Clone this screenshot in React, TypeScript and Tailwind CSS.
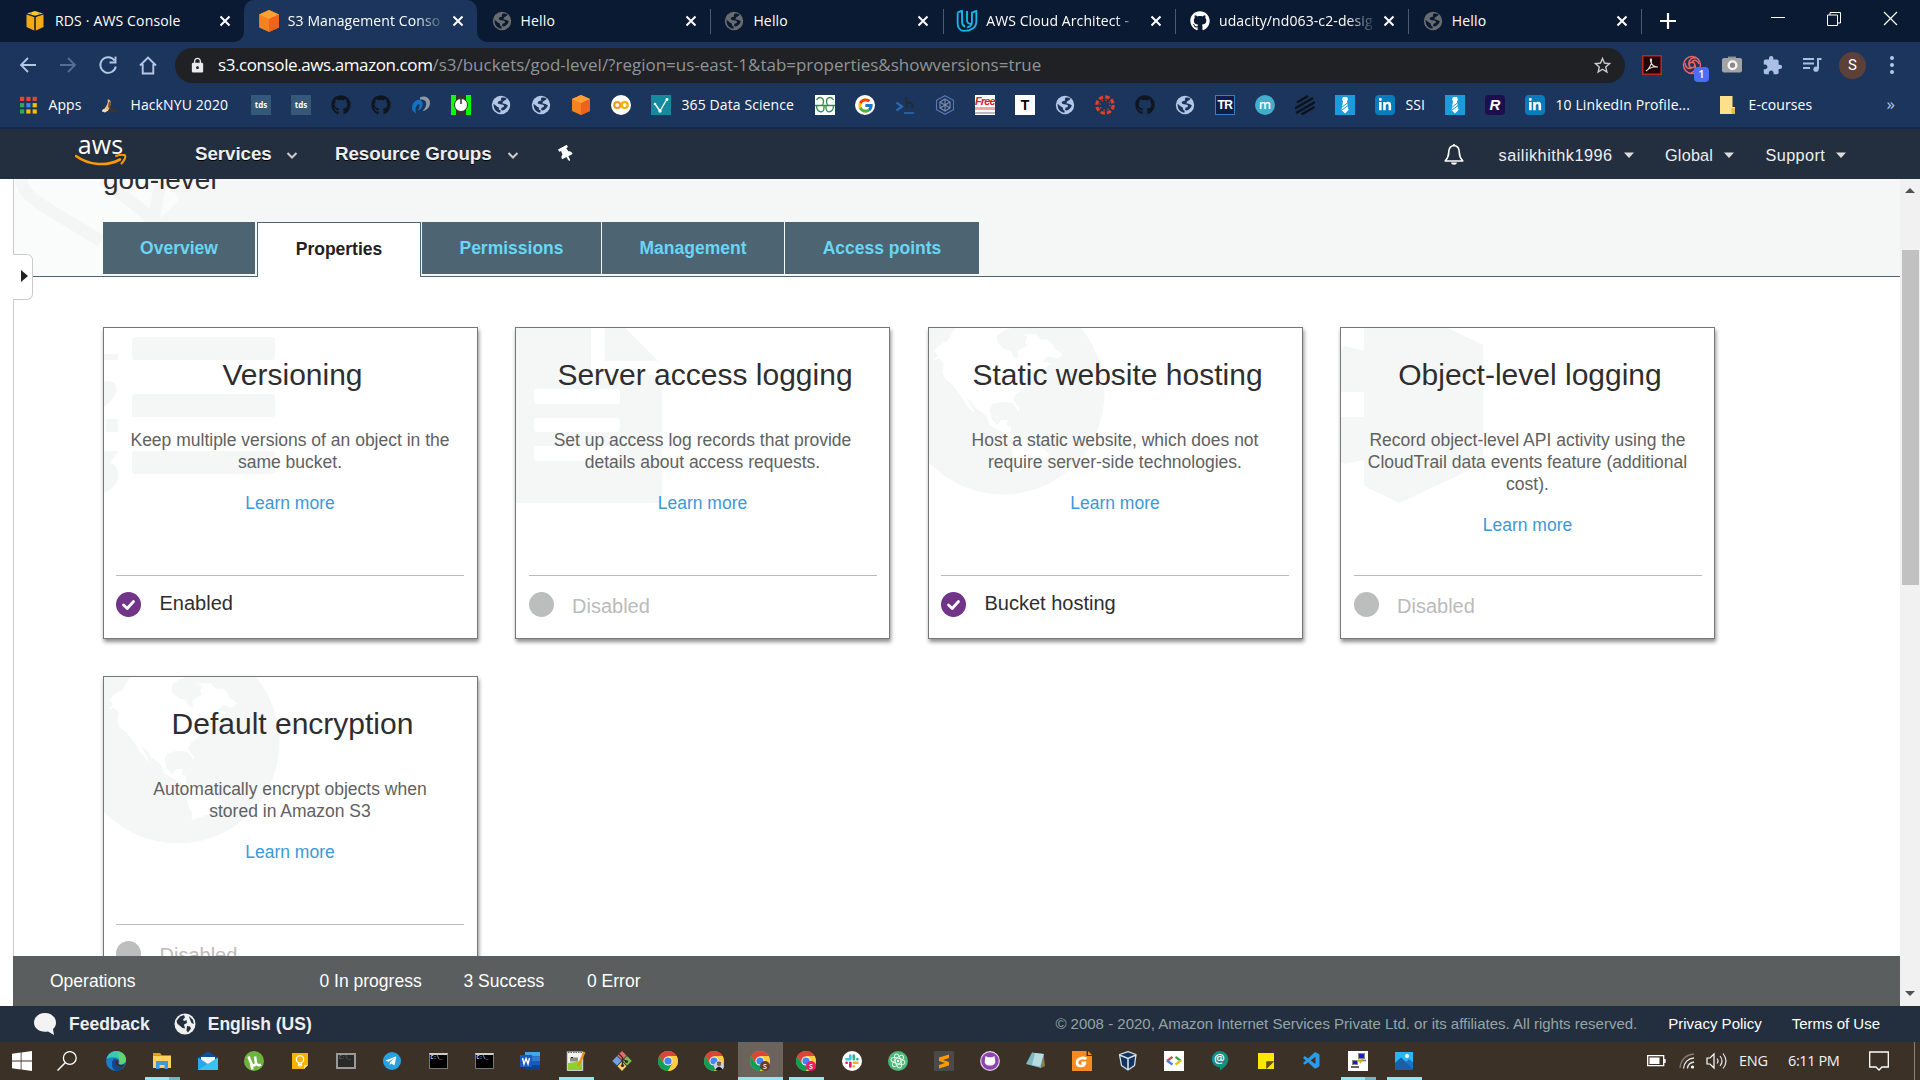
import React from "react";
import { FaGithub, FaLinkedinIn, FaTelegramPlane, FaThumbtack } from "react-icons/fa";
import { FcGoogle } from "react-icons/fc";
import { MdExtension, MdLock, MdOutlineStarBorder } from "react-icons/md";
import { VscVscode } from "react-icons/vsc";

/* ---------- small drawings ---------- */

function Svg({ size = 20, children, box = 20 }: { size?: number; box?: number; children: React.ReactNode }) {
  return (
    <svg width={size} height={size} viewBox={`0 0 ${box} ${box}`} fill="none" className="block shrink-0">
      {children}
    </svg>
  );
}

function Globe({ color, cut }: { color: string; cut: string }) {
  return (
    <Svg>
      <circle cx="10" cy="10" r="9.200" fill={color} />
      <path d="M10.500 2.200H15l-1.500 2.600-.2 2.200-3 .3-.6 1.500 2.800.6c1.500.3 2.300 1.200 2 2.400l-2.200 1.200-.8 2.700-1.500 2.400H8.600v-2.300L7 12.200 5 11 1.800 8.700c-.5 3 .8 6 3.200 7.800l4.500 2.200 4-1 4.300-4.200" fill="none" />
      <path d="M2.600 8.800l3.600 3 1.600.6.2 2 1.600 1.200v2c-4.200.3-7.400-3.800-7-8.800zM10.800 2.500c-1.300 1-1 2-.5 3l-2.600.7c-1.400.6-1.300 2.400.2 2.900l4 .7c1.500.4 1.600 1.900.2 2.400l-1.600.6-.4 2.200 1.500.6c2-.5 4.500-2.600 5.300-5.400l-2.600-1.200-3-.7 1-2 2.500-1.500 1-1.200C14.500 2.900 12.800 2.400 10.800 2.500z" fill={cut} />
    </Svg>
  );
}

const GreyGlobe = () => <Globe color="#686c70" cut="#0a1a33" />;
const LightGlobe = () => <Globe color="#b4c7e7" cut="#1b355c" />;

const OrangeCube = ({ big = false }: { big?: boolean }) => (
  <Svg size={big ? 22 : 20}>
    <path d="M10 0l9 4v12l-9 4-9-4V4z" fill="#f58220" />
    <path d="M10 0l9 4-9 4.200L1 4z" fill="#ffa033" />
    <path d="M10 8.200L19 4v12l-9 4z" fill="#ed6320" />
  </Svg>
);

const YellowCube = () => (
  <Svg>
    <path d="M1.500 3.500L9 6v13.500L1.500 16zM18.500 3.500L11 6v13.500l7.500-3.500z" fill="#f2a917" />
    <path d="M2 2.500L10 0l8 2.500-8 2.300z" fill="#ffc63a" />
    <path d="M6 1.500v3M14 1.500v3" stroke="#8a5b06" strokeWidth=".7" />
    <path d="M9.400 6v13.500h1.200V6z" fill="#7b5207" />
  </Svg>
);

const Udacity = () => (
  <Svg size={22}>
    <path d="M1.500 2.200l4-1.500v10c0 2.400 1 3.800 2.800 4.300M1.500 2.200v10c0 3.800 2.300 6.800 6 6.800 6 0 11-3 11-8.500V.8l-4 1.500v8.200c0 3.200-2 5-4.500 5.500" stroke="#15b8ea" strokeWidth="1.700" strokeLinejoin="round" />
    <path d="M10 1v8.300c0 2.300 1.300 3.400 4 3.300" stroke="#15b8ea" strokeWidth="1.700" />
  </Svg>
);

const Close = () => (
  <Svg size={14} box={14}>
    <path d="M2.500 2.500l9 9m0-9l-9 9" stroke="#fff" strokeWidth="2" />
  </Svg>
);

const SolidCaret = () => (
  <Svg size={10} box={10}>
    <path d="M0 2.500h10L5 8z" fill="#ddd" />
  </Svg>
);

const Chevron = () => (
  <Svg size={12} box={12}>
    <path d="M1.500 5L6 9.500 10.500 5" stroke="#ccc" strokeWidth="2" />
  </Svg>
);

const Tds = () => (
  <span className="flex h-5 w-5 items-center justify-center bg-[#355876] text-[8px] font-bold leading-none text-white">tds</span>
);

const Tie = () => (
  <Svg>
    <rect width="20" height="20" fill="#1a9bdc" />
    <path d="M8 2h4l1 2.500-1 1.700L13.500 15 10 18.500 6.500 15 8 6.200 7 4.500z" fill="#fff" />
    <path d="M7.200 12l5.300-4M7 15l6-4.500" stroke="#1a9bdc" />
  </Svg>
);

const LinkedIn = () => (
  <span className="flex h-5 w-5 items-center justify-center rounded-sm bg-[#0a7bbd] text-white">
    <FaLinkedinIn size={14} />
  </span>
);

/* ---------- browser chrome ---------- */

function Tab({ icon, title, active, sep, fade }: { icon: React.ReactNode; title: string; active?: boolean; sep?: boolean; fade?: boolean }) {
  return (
    <div
      className={
        active
          ? "relative flex h-[42px] w-[232.800px] shrink-0 items-center rounded-t-[10px] bg-[#1b355c] pl-[13.500px]"
          : "relative flex h-[42px] w-[232.800px] shrink-0 items-center pl-[13.500px]"
      }
    >
      {active && (
        <>
          <svg className="absolute -left-[10px] bottom-0" width="10" height="10"><path d="M10 0v10H0A10 10 0 0 0 10 0z" fill="#1b355c" /></svg>
          <svg className="absolute -right-[10px] bottom-0" width="10" height="10"><path d="M0 0v10h10A10 10 0 0 1 0 0z" fill="#1b355c" /></svg>
        </>
      )}
      {sep && <span className="absolute left-0 top-[9px] h-[25px] w-px bg-[#4a5a75]" />}
      <span className="flex w-[22px] justify-center">{icon}</span>
      <span
        className={
          fade
            ? "ml-2 w-[156px] whitespace-nowrap pb-[2px] text-[14px] tracking-[0.100px] text-white [mask-image:linear-gradient(to_right,black_128px,transparent_158px)]"
            : "ml-2 w-[156px] whitespace-nowrap pb-[2px] text-[14px] tracking-[0.160px] text-white"
        }
      >
        {title}
      </span>
      <span className="ml-[7px]"><Close /></span>
    </div>
  );
}

function TabStrip() {
  return (
    <div className="flex h-[42px] bg-[#0a1a33] pl-[11.500px]">
      <Tab icon={<span className="-ml-[3px]"><YellowCube /></span>} title="RDS · AWS Console" />
      <Tab icon={<OrangeCube big />} title="S3 Management Conso" active fade />
      <Tab icon={<GreyGlobe />} title="Hello" />
      <Tab icon={<GreyGlobe />} title="Hello" sep />
      <Tab icon={<Udacity />} title="AWS Cloud Architect - " sep fade />
      <Tab icon={<FaGithub size={20} color="#fff" />} title="udacity/nd063-c2-desig" sep fade />
      <Tab icon={<GreyGlobe />} title="Hello" sep />
      <div className="relative flex w-[120px] items-center pl-[19px]">
        <span className="absolute left-0 top-[9px] h-[25px] w-px bg-[#4a5a75]" />
        <Svg size={16} box={16}><path d="M8 0v16M0 8h16" stroke="#fff" strokeWidth="2.200" /></Svg>
      </div>
      <div className="flex h-[37px] grow items-center justify-between pl-[10px] pr-[22px]">
        <Svg size={14} box={14}><path d="M0 5.500h14" stroke="#fff" /></Svg>
        <Svg size={14} box={14}><path d="M.5 3h10v10.500H.5zM3 3V.5h10.500V11h-3" stroke="#fff" /></Svg>
        <Svg size={15} box={15}><path d="M1 1l13 13M14 1L1 14" stroke="#fff" strokeWidth="1.200" /></Svg>
      </div>
    </div>
  );
}

function Toolbar() {
  return (
    <div className="flex h-11 items-center bg-[#1b355c] pt-[2px] text-[#b4c7e7]">
      <div className="flex w-[175px] items-center gap-5 pl-[17.500px]">
        <Svg><path d="M18 10H3m7-7l-7 7 7 7" stroke="#b4c7e7" strokeWidth="1.800" /></Svg>
        <Svg><path d="M2 10h15m-7-7l7 7-7 7" stroke="#566e93" strokeWidth="1.800" /></Svg>
        <Svg><path d="M16.500 5.500A7.800 7.800 0 1 0 17.800 11.500M17.500 1.500v6h-6" stroke="#b4c7e7" strokeWidth="1.900" /></Svg>
        <Svg><path d="M2 10.500l8-8 8 8M4.700 9v9.500h10.600V9" stroke="#b4c7e7" strokeWidth="1.900" /></Svg>
      </div>
      <div className="flex h-[35px] w-[1450px] items-center rounded-full bg-[#202124] pl-[14px] pr-[12px] text-[17px]">
        <MdLock size={17} color="#e8eaed" />
        <span className="ml-[12px] whitespace-nowrap pb-px tracking-[-0.410px] text-white">
          s3.console.aws.amazon.com<span className="tracking-[-0.010px] text-[#8f9499]">/s3/buckets/god-level/?region=us-east-1&amp;tab=properties&amp;showversions=true</span>
        </span>
        <span className="ml-auto"><MdOutlineStarBorder size={21} color="#c8cacd" /></span>
      </div>
      <div className="flex grow items-center pl-[17px]">
        <span className="w-10">
          <Svg>
            <rect x=".8" y=".8" width="18.400" height="18.400" fill="#220507" stroke="#c8281e" strokeWidth="1.400" />
            <path d="M4 16c3-2 6-7 5.500-11.500C9.300 3.200 8 4 8.500 6c.8 3.500 3.500 6 7.500 6-3.500-.6-8 .6-12 4z" stroke="#ddd" strokeWidth="1.100" />
          </Svg>
        </span>
        <span className="relative w-10">
          <Svg>
            <g stroke="#f0635f" strokeWidth="1.500">
              <circle cx="10" cy="10" r="8.500" />
              <circle cx="10" cy="10" r="2.800" />
              <path d="M10 7.200C12 4 16 5 17 9M12.800 10c2 3 0 7-4 8M10 12.800c-4 2-7-1-7-5M7.200 10C6 6 9 2 14 3" />
            </g>
          </Svg>
          <span className="absolute left-[12px] top-[12px] flex h-[15px] w-[15px] items-center justify-center rounded-sm bg-[#4c6ef5] text-[11px] font-semibold text-white">1</span>
        </span>
        <span className="w-10">
          <Svg>
            <path d="M6 3V1.500h8V3z" fill="#8f8f8f" />
            <rect x="0" y="3" width="20" height="14.500" rx="2" fill="#a3a3a3" />
            <circle cx="10.500" cy="10.200" r="5" fill="#f5f5f5" /><circle cx="10.500" cy="10.200" r="2.600" fill="#888" />
          </Svg>
        </span>
        <span className="w-10"><MdExtension size={21} color="#a9bfe4" /></span>
        <span className="w-[37px]">
          <Svg><path d="M1 4h11M1 8.500h11M1 13h7" stroke="#a9bfe4" strokeWidth="1.800" /><path d="M19.500 4H16v10" stroke="#a9bfe4" strokeWidth="2" /><circle cx="14" cy="14.200" r="2.600" fill="#a9bfe4" /></Svg>
        </span>
        <span className="flex h-[27px] w-[27px] items-center justify-center rounded-full bg-[#5d4037] font-[Roboto] text-[15px] text-white">S</span>
        <svg width="4" height="18" className="ml-[24px] fill-[#b4c7e7]"><circle cx="2" cy="2" r="2" /><circle cx="2" cy="9" r="2" /><circle cx="2" cy="16" r="2" /></svg>
      </div>
    </div>
  );
}

function Mark({ w = "w-10", icon, label }: { w?: string; icon: React.ReactNode; label?: string }) {
  return (
    <div className={"flex shrink-0 items-center " + w}>
      <span className="flex w-5 shrink-0 justify-center">{icon}</span>
      {label && <span className="ml-[10.500px] whitespace-nowrap pb-[2px] text-[14px] tracking-[0.100px] text-white">{label}</span>}
    </div>
  );
}

function Bookmarks() {
  const gh = <FaGithub size={20} color="#10161f" />;
  return (
    <div className="flex h-[43px] items-center border-b-2 border-[#14294b] bg-[#1b355c] pb-[3px] pl-[18px]">
      <Mark w="w-[82px]" label="Apps" icon={
        <Svg>
          {["#ea4335", "#ea4335", "#ea4335", "#34a853", "#4285f4", "#fbbc05", "#34a853", "#fbbc05", "#fbbc05"].map((c, i) => (
            <rect key={i} x={2 + (i % 3) * 6.300} y={1.800 + Math.floor(i / 3) * 6.300} width="4.200" height="4.200" fill={c} />
          ))}
        </Svg>
      } />
      <Mark w="w-[151px]" label="HackNYU 2020" icon={
        <Svg><path d="M7.500 4.500c4-.5 3.500 4 2.500 7l-1.500 4-3 1.500-3.500-1 3-3c1.500-2.500 3.500-4.500 2.500-8.500z" fill="#e8c48a" /><path d="M9 6l2 2-1 6-2-2z" fill="#7a4d2c" /><path d="M10 13l4 .5 5 3-4 1-8-.5z" fill="#3c3338" /><path d="M3 14l5 1-3 2.500-3-1z" fill="#f4dfbd" /></Svg>
      } />
      <Mark icon={<Tds />} />
      <Mark icon={<Tds />} />
      <Mark icon={gh} />
      <Mark icon={gh} />
      <Mark icon={
        <Svg><path d="M8.500 4.500C3 5 0 10 1.500 15.500L5 18.500C4 14 4.500 10 8 9c1.500 1 0 3.500-1 6.500 5-1.500 6.500-9 1.500-11z" fill="#1273c4" /><path d="M9 2.500C14 0 19 3 19 8c0 4-3 7.500-7.500 8 3-3 4.500-6 3.500-9-1-2.200-3-2.500-6-2.500z" fill="#8d99a8" /></Svg>
      } />
      <Mark icon={
        <Svg><rect width="20" height="20" fill="#0cfb0c" /><path d="M5 0h10v20H5z" fill="#333" /><circle cx="10" cy="10" r="6.500" fill="#fff" stroke="#333" /><path d="M10 4v5" stroke="#222" strokeWidth="1.400" /></Svg>
      } />
      <Mark icon={<LightGlobe />} />
      <Mark icon={<LightGlobe />} />
      <Mark icon={<OrangeCube />} />
      <Mark icon={
        <Svg><circle cx="10" cy="10" r="10" fill="#fff" /><circle cx="6.300" cy="10" r="3" stroke="#f09a1a" strokeWidth="2.200" /><circle cx="13.700" cy="10" r="3" stroke="#f9ab00" strokeWidth="2.200" /></Svg>
      } />
      <Mark w="w-[164px]" label="365 Data Science" icon={
        <Svg><rect width="20" height="20" fill="#148a9c" /><path d="M4 9l5 7 7-12" stroke="#fff" strokeWidth="1.300" /><circle cx="4" cy="9" r="1.300" fill="#fff" /><circle cx="9" cy="16" r="1.700" fill="#fff" /><circle cx="16" cy="4.500" r="1.400" fill="#fff" /></Svg>
      } />
      <Mark icon={
        <Svg><rect width="20" height="20" fill="#fff" /><path d="M1.500 5c2-4 7-3 7 1.500 0 2-1 3.500-2 4M0 10.500h20M18.500 5c-2-4-7-3-7 1.500 0 2 1 3.500 2 4M1.500 10.500c0 7 7 8.500 7.500 3V10M18.500 10.500c0 7-7 8.500-7.500 3V10" stroke="#2f8d46" strokeWidth="1.300" /></Svg>
      } />
      <Mark icon={<span className="flex h-5 w-5 items-center justify-center rounded-full bg-white"><FcGoogle size={17} /></span>} />
      <Mark icon={
        <Svg><path d="M1.500 7.500l5.500 4-5.500 4" stroke="#2c68ad" strokeWidth="2.200" /><path d="M11.500 2v11M11.500 9c5-3 6 0 6 4" stroke="#252b33" strokeWidth="2.200" /><path d="M9 18h10" stroke="#2c68ad" strokeWidth="1.600" /></Svg>
      } />
      <Mark icon={
        <Svg><g stroke="#5c77b4" strokeWidth="1.100"><path d="M10 .7l8.500 4.600v9.400L10 19.300l-8.500-4.600V5.300z" /><path d="M10 4l5 3v6l-5 3-5-3V7z" stroke="#7c8caa" /><path d="M5 7l10 6M15 7L5 13M10 4v12" stroke="#7c8caa" /></g></Svg>
      } />
      <Mark icon={
        <span className="flex h-5 w-5 flex-col bg-white">
          <span className="font-['Liberation_Sans'] text-[11px] font-bold italic leading-[12px] tracking-[-0.900px] text-[#d2232a]">Free</span>
          <span className="h-[3px] bg-[#f1a5a7]" />
          <span className="mt-[2px] h-[2px] bg-[#bbb]" />
        </span>
      } />
      <Mark icon={<span className="flex h-5 w-5 items-center justify-center bg-white font-['Liberation_Sans'] text-[14px] font-bold text-black">T</span>} />
      <Mark icon={<LightGlobe />} />
      <Mark icon={
        <Svg><circle cx="10" cy="10" r="8.200" stroke="#e13f2b" strokeWidth="3.200" strokeDasharray="4.400 2.040" /><circle cx="10" cy="10" r="5" stroke="#e13f2b" strokeWidth="1.300" strokeDasharray="1.300 2.627" /></Svg>
      } />
      <Mark icon={gh} />
      <Mark icon={<LightGlobe />} />
      <Mark icon={<span className="flex h-5 w-5 items-center justify-center border border-[#2b85c8] bg-[#111c48] font-['Liberation_Sans'] text-[12px] font-bold tracking-[-0.500px] text-white">TR</span>} />
      <Mark icon={<span className="flex h-5 w-5 items-center justify-center rounded-full bg-[#42aecb] pb-[2px] text-[13px] font-semibold leading-none text-white">m</span>} />
      <Mark icon={
        <Svg><g stroke="#0d131c" strokeWidth="2.400"><path d="M2 7.500L13 1M0 13.500L18 3M1 18L20 7M6.500 19.500L19.500 12" /></g></Svg>
      } />
      <Mark icon={<Tie />} />
      <Mark w="w-[70px]" label="SSI" icon={<LinkedIn />} />
      <Mark icon={<Tie />} />
      <Mark icon={<span className="flex h-5 w-5 items-center justify-center rounded bg-[#1d0f4e] font-['Liberation_Sans'] text-[15px] font-bold italic text-white">R</span>} />
      <Mark w="w-[193px]" label="10 LinkedIn Profile..." icon={<LinkedIn />} />
      <Mark w="w-[130px]" label="E-courses" icon={
        <Svg><path d="M2 1h12.500v11H17v7H2z" fill="#ffe08a" /><path d="M13.500 13H17v6h-3.500z" fill="#e8bd3d" /></Svg>
      } />
      <span className="ml-auto mr-[25px] pb-[3px] text-[17px] leading-none text-[#b4c7e7]">»</span>
    </div>
  );
}

/* ---------- console header ---------- */

function AwsNav() {
  return (
    <div className="flex h-[50px] items-center bg-[#232f3e] font-['Liberation_Sans',sans-serif] text-[#eee]">
      <div className="relative ml-[75px] flex h-[36px] w-[51px] justify-center font-['Open_Sans']">
        <span className="-mt-[7px] text-[25px] font-medium leading-[30px] tracking-[0.100px] text-white">aws</span>
        <svg className="absolute left-0 top-[18px]" width="52" height="16" fill="none">
          <path d="M1 2c13 9.500 31 10.500 44 3.500" stroke="#f90" strokeWidth="2.600" strokeLinecap="round" />
          <path d="M41 2c4-1.500 8-1.500 9-.5s-.5 5-3.500 8" stroke="#f90" strokeWidth="2" strokeLinecap="round" />
        </svg>
      </div>
      <span className="ml-[69px] w-[91px] text-[18.750px] font-bold tracking-[-0.050px] [text-shadow:0_1px_0_#000]">Services</span>
      <Chevron />
      <span className="ml-[37px] w-[172px] whitespace-nowrap text-[18.750px] font-bold tracking-[-0.050px] [text-shadow:0_1px_0_#000]">Resource Groups</span>
      <Chevron />
      <span className="ml-[39px] flex -rotate-[28deg]"><FaThumbtack size={16} color="#fff" /></span>
      <div className="ml-auto flex items-center pt-[2px]">
        <svg width="20" height="22" viewBox="0 0 20 22" fill="none" className="mr-[35px]">
          <path d="M10 1.500c-4 .5-5.300 3.500-5.300 7 0 4.500-1.200 6-3.500 8.500h17.600c-2.300-2.500-3.500-4-3.500-8.500 0-3.500-1.300-6.500-5.300-7z" stroke="#fff" strokeWidth="1.600" strokeLinejoin="round" />
          <path d="M7 18.500h6c-.5 3-5.500 3-6 0z" fill="#fff" /><path d="M10 0v2" stroke="#fff" strokeWidth="1.600" />
        </svg>
        <span className="w-[125px] text-[16.250px] tracking-[0.500px]">sailikhithk1996</span>
        <SolidCaret />
        <span className="ml-[31.500px] w-[58.500px] text-[16.250px] tracking-[0.200px]">Global</span>
        <SolidCaret />
        <span className="ml-[32px] w-[70px] text-[16.250px] tracking-[0.400px]">Support</span>
        <SolidCaret />
        <span className="w-[74.500px]" />
      </div>
    </div>
  );
}

/* ---------- watermarks behind the cards ---------- */

const GlobeArt = () => (
  <svg className="absolute left-0 top-0" width="190" height="180">
    <circle cx="74" cy="65" r="101.500" fill="#f5f7f7" />
    <g transform="scale(.3333) translate(-10 -16)" fill="#fff">
      <path d="M25 85L45 65 65 55 85 22 95 14H258L235 24 213 40 215 60 235 80 255 85 264 104 276 108 276 86 292 75 304 70 298 58 306 42 290 35 332 35 345 52 365 50 378 60 385 76 410 95 395 108 368 100 350 117 378 122 352 145 330 150 305 170 300 185 290 200 270 215 262 232 282 256 278 265 262 240 230 237 200 245 192 262 198 290 215 308 226 293 247 291 241 308 256 312 254 332 270 345 262 352 245 340 225 325 192 307 182 280 150 255 138 236 122 225 145 265 140 268 118 240 105 218 75 180 60 170 50 150 54 122 40 108 24 112 38 98z" />
      <path d="M268 345L300 352 320 365 352 378 372 395 340 422 300 436 272 448 276 425 264 405 258 380z" />
    </g>
  </svg>
);

const ListArt = () => (
  <svg className="absolute left-0 top-0" width="190" height="190" fill="#f5f7f7">
    <rect x="28" y="9" width="143" height="23" rx="3" /><rect x="28" y="66" width="143" height="23" rx="3" /><rect x="28" y="123" width="143" height="23" rx="3" />
    <path d="M0 26h14v6H0zM0 54c8-3 14 2 12 10-1 6-6 10-12 15zM2 91h12v13H2zM0 123h14l-8 12c10 2 11 18 3 24-4 4-7 5-9 6z" />
  </svg>
);

const FileArt = () => (
  <svg className="absolute left-0 top-0" width="190" height="190">
    <path d="M0 0h75v47h71v125q0 3-3 3H0zM89 0h20l33 33H89z" fill="#f5f7f7" />
    <rect x="18" y="61" width="86" height="15" rx="3" fill="#fff" /><rect x="18" y="90" width="86" height="14" rx="3" fill="#fff" /><rect x="18" y="118" width="86" height="15" rx="3" fill="#fff" />
  </svg>
);

const BlockArt = () => (
  <svg className="absolute left-0 top-0" width="190" height="190" fill="#f5f7f7">
    <path d="M23 0h84l35 17v119l-84 39-35-17zM0 22l4-4 19 5v41H0zM0 89h23v43L4 136l-4-2z" />
  </svg>
);

/* ---------- cards ---------- */

type CardData = { title: string; lines: string[]; art: React.ReactNode; on?: boolean; status: string };

const cards: CardData[] = [
  { title: "Versioning", lines: ["Keep multiple versions of an object in the", "same bucket."], art: <ListArt />, on: true, status: "Enabled" },
  { title: "Server access logging", lines: ["Set up access log records that provide", "details about access requests."], art: <FileArt />, status: "Disabled" },
  { title: "Static website hosting", lines: ["Host a static website, which does not", "require server-side technologies."], art: <GlobeArt />, on: true, status: "Bucket hosting" },
  { title: "Object-level logging", lines: ["Record object-level API activity using the", "CloudTrail data events feature (additional", "cost)."], art: <BlockArt />, status: "Disabled" },
  { title: "Default encryption", lines: ["Automatically encrypt objects when", "stored in Amazon S3"], art: <GlobeArt />, status: "Disabled" },
];

function Card({ title, lines, art, on, status }: CardData) {
  return (
    <div className="relative flex h-[312px] w-[375px] flex-col border border-[#777] bg-white shadow-[1px_3px_4px_rgba(0,0,0,0.45)]">
      {art}
      <div className="relative flex h-[247px] flex-col items-center pt-[30px]">
        <h2 className="pl-[5px] text-[30px] leading-[34px] text-[#2e2e2e]">{title}</h2>
        <div className="mt-[37px] whitespace-nowrap text-center text-[17.500px] leading-[22px] text-[#5f6161]">
          {lines.map((l) => <p key={l}>{l}</p>)}
        </div>
        <a className="mt-[19px] text-[17.500px] leading-[22px] text-[#3b98d9]">Learn more</a>
      </div>
      <div className="relative mx-[12.500px] flex border-t border-[#bbb] pt-[16px]">
        {on ? (
          <Svg size={25} box={25}><circle cx="12.500" cy="12.500" r="12.500" fill="#713488" /><path d="M7.500 13l3.700 3.500 6.300-7" stroke="#fff" strokeWidth="2.800" strokeLinecap="round" strokeLinejoin="round" /></Svg>
        ) : (
          <Svg size={25} box={25}><circle cx="12.500" cy="12.500" r="12.500" fill="#bcbebe" /></Svg>
        )}
        {on ? (
          <span className="-mt-px ml-[18.500px] text-[20px] leading-6 text-[#2e2e2e]">{status}</span>
        ) : (
          <span className="ml-[18.500px] mt-[2px] text-[20px] leading-6 text-[#bbb]">{status}</span>
        )}
      </div>
    </div>
  );
}

function TealTab({ w, children }: { w: string; children: string }) {
  return <div className={"flex h-[52px] items-center justify-center bg-[#4d6472] text-[17.500px] font-bold text-[#68d6f4] " + w}>{children}</div>;
}

function Page() {
  return (
    <div className="flex h-[827px] bg-white font-['Liberation_Sans',sans-serif]">
      <div className="relative ml-[13px] flex w-[1887px] flex-col overflow-hidden">
        <div className="relative h-[98px] shrink-0 border-b border-[#4d6472] bg-[#f4f7f6] pl-[90px]">
          <svg className="absolute left-0 top-0" width="190" height="97" fill="none">
            <path d="M0 0h150c10 8 16 18 18 30v67H0z" fill="#fafcfb" />
            <path d="M8 0c2 15 15 22 30 32l50 30M90 0c20 20 45 30 60 55M148 0l-8 44" stroke="#f3f6f5" strokeWidth="12" />
            <path d="M168 20c10 10 8 20 8 40v40h-90V97" fill="#f4f7f6" />
          </svg>
          <h1 className="relative -mt-[15px] h-8 text-[28px] leading-8 text-[#2e2e2e]">god-level</h1>
          <div className="relative mt-[26px] flex">
            <TealTab w="w-[152px]">Overview</TealTab>
            <div className="ml-[2px] flex h-[55px] w-[164px] items-center justify-center border border-b-0 border-[#4d6472] bg-white pb-px text-[17.500px] font-bold text-[#222]">Properties</div>
            <div className="ml-px flex gap-px">
              <TealTab w="w-[179px]">Permissions</TealTab>
              <TealTab w="w-[182px]">Management</TealTab>
              <TealTab w="w-[194px]">Access points</TealTab>
            </div>
          </div>
        </div>
        <div className="ml-[89.500px] mt-[50px] grid w-[1612.500px] grid-cols-4 gap-x-[37.500px] gap-y-[37px]">
          {cards.map((c) => <Card key={c.title} {...c} />)}
        </div>
        <div className="absolute left-0 top-0 h-full w-px bg-[#ccc]" />
        <div className="absolute bottom-0 left-0 flex h-[50px] w-full items-center bg-[#5a5e5e] pl-[37px] text-[17.500px] text-white">
          <span className="w-[269.500px]">Operations</span>
          <span className="w-[144px]">0 In progress</span>
          <span className="w-[123.500px]">3 Success</span>
          <span>0 Error</span>
        </div>
        <div className="absolute left-0 top-[75px] flex h-[46px] w-[20px] items-center rounded-r-md border border-l-0 border-[#ccc] bg-white pb-[2px] pl-[8px]">
          <svg width="7" height="12"><path d="M0 0l7 6-7 6z" fill="#222" /></svg>
        </div>
      </div>
      <div className="flex w-5 flex-col items-center bg-[#f1f1f1]">
        <svg className="mt-[9px]" width="10" height="5"><path d="M0 5h10L5 0z" fill="#505050" /></svg>
        <div className="mt-[57px] h-[335px] w-[17px] bg-[#c1c1c1]" />
        <svg className="mb-[10px] mt-auto" width="10" height="5"><path d="M0 0h10L5 5z" fill="#505050" /></svg>
      </div>
    </div>
  );
}

function Footer() {
  return (
    <div className="flex h-9 items-center bg-[#232f3e] font-['Liberation_Sans',sans-serif] text-[15px] text-[#eee]">
      <svg className="ml-[34px]" width="23" height="22"><path d="M11 0c6 0 11 4 11 9.500 0 3-1 5-3 6.500l1 6-6-3.500C6 20 0 15.500 0 9.500 0 4 5 0 11 0z" fill="#f3f3f3" /></svg>
      <span className="ml-[12px] text-[17.500px] font-bold">Feedback</span>
      <svg className="ml-[24px]" width="22" height="22">
        <circle cx="11" cy="11" r="10.500" fill="#f0f0f0" />
        <path d="M2.500 8L6 3.500l4-1.500 1 2.500-2 2 1 1.500 2.500-1 .5 3-3 1.500 1 4-2.500-.5L5 12l-1.500-1zM13 13l3 .5 1 2-3 4-1.500-2zM15 3l4 4 .8 4-2.300-1-1.500-3.500z" fill="#232f3e" />
      </svg>
      <span className="ml-[12px] text-[17.500px] font-bold">English (US)</span>
      <span className="ml-auto whitespace-nowrap text-[#95a5a6]">© 2008 - 2020, Amazon Internet Services Private Ltd. or its affiliates. All rights reserved.</span>
      <span className="ml-[31px] text-white">Privacy Policy</span>
      <span className="ml-[30px] mr-[40px] text-white">Terms of Use</span>
    </div>
  );
}

/* ---------- taskbar ---------- */

const Chrome = ({ badge, text }: { badge?: string; text?: string }) => (
  <span className="relative">
    <Svg>
      <circle cx="10" cy="10" r="10" fill="#fbc116" />
      <path d="M1.340 5A10 10 0 0 1 18.660 5H10L5.670 12.500z" fill="#db4437" />
      <path d="M1.340 5A10 10 0 0 0 10 20l4.330-7.500H5.670z" fill="#0f9d58" />
      <path d="M10 20l4.330-7.500L10 5h8.660A10 10 0 0 1 10 20z" fill="#ffcd40" />
      <circle cx="10" cy="10" r="4.600" fill="#f1f1f1" /><circle cx="10" cy="10" r="3.600" fill="#4285f4" />
    </Svg>
    {badge && (
      <span className={"absolute left-[10px] top-[10px] flex h-[10px] w-[10px] items-center justify-center rounded-full text-[7px] font-semibold leading-none text-white " + badge}>{text}</span>
    )}
  </span>
);

const Cmd = () => (
  <span className="mb-px flex h-[16px] w-[19px] flex-col border border-t-2 border-[#777] border-t-[#ccc] bg-black pl-[1px] font-['Liberation_Mono'] text-[5px] font-bold leading-[7px] text-[#ddd]">C:\_</span>
);

function Task({ children, active, open, stacked }: { children: React.ReactNode; active?: boolean; open?: boolean; stacked?: boolean }) {
  return (
    <div className="relative flex h-full w-[46px] shrink-0 items-center justify-center">
      {active && <span className="absolute left-px top-0 h-full w-[45px] bg-[#6b645c]" />}
      <span className="relative flex">{children}</span>
      {active && <span className="absolute bottom-0 left-px h-[3px] w-[45px] bg-[#8fe8ec]" />}
      {open && <span className="absolute bottom-0 left-[6px] h-[3px] w-[35px] bg-[#8fe8ec]" />}
      {stacked && (
        <span className="absolute bottom-0 left-[6px] flex h-[3px] w-[35px] bg-[#6fb9bb]"><span className="w-6 bg-[#8fe8ec]" /></span>
      )}
    </div>
  );
}

function Taskbar() {
  return (
    <div className="flex h-[38px] bg-[#3b3127]">
      <div className="flex w-[44px] items-center justify-center">
        <Svg><path d="M0 2.800l8.700-1.200v8H0zM9.500 1.500L20 0v9.600H9.500zM0 10.400h8.700v8L0 17.200zM9.500 10.400H20V20L9.500 18.500z" fill="#fff" /></Svg>
      </div>
      <div className="mr-[3px] flex w-[46px] items-center justify-center">
        <Svg><circle cx="12.800" cy="7" r="6.400" stroke="#fff" strokeWidth="1.300" /><path d="M8.200 11.700L.5 19.500" stroke="#fff" strokeWidth="1.500" /></Svg>
      </div>
      <Task><Svg>
        <circle cx="10" cy="10" r="10" fill="#1b7fd0" />
        <path d="M.5 8C2 2 7 0 10 0c6 0 10 4 10 8.500 0 4-4 5.500-7 4.500 1.500-2 .5-5-2-6-4-1.500-8-.5-10.500 1z" fill="#3cc9b4" />
        <path d="M12 .2C17 1 20 5 20 8.500c0 4-4 5.500-7 4.500 1.500-3-1-9-1-12.800z" fill="#67d95a" opacity=".75" />
        <path d="M6 12c0-3 2-5 4.500-4.500C7 10 9 15 14 16l4-1c-2 3.500-5 5-8 5-3-1-4.500-5-4-8z" fill="#12488f" />
        <path d="M9.500 9c1-1 3 0 3 1.500 0 1-.5 1.500 0 2.500 1.500 1.500 5 1 6.500-.5-.5 2-1.500 3-2.500 3.500C12 17 7 13 9.500 9z" fill="#3b3127" />
      </Svg></Task>
      <Task stacked><Svg><path d="M1 2h7l2 2.500H1z" fill="#e8a200" /><path d="M1 4.500h18V17H1z" fill="#ffd25e" /><path d="M4 10h12v8h-3.500v-4h-5v4H4z" fill="#3f97dc" /></Svg></Task>
      <Task><Svg><path d="M0 6.500L10 .5l10 6V12H0z" fill="#0b4f9e" /><path d="M3 6h14v9H3z" fill="#f5f5f5" /><path d="M0 6.500l10 6.500 10-6.500V19H0z" fill="#28a8ea" /><path d="M0 19L20 6.500V19z" fill="#50d9ff" opacity=".5" /></Svg></Task>
      <Task><Svg><circle cx="10" cy="10" r="10" fill="#6db33f" /><path d="M4.500 5.500l3 7.500c1.500 2.500 4.500 1.500 4.500-1l-1-6.500M12 12c.5 2 3 3 5 1.500M7 12.500l1.500 6" stroke="#fff" strokeWidth="2.600" /></Svg></Task>
      <Task><Svg><path d="M2 2h16v12l-4 4H2z" fill="#f5b400" /><path d="M14 18v-4h4z" fill="#ffdf80" /><circle cx="10" cy="8.300" r="3.700" stroke="#fff" strokeWidth="1.200" /><path d="M8.500 12v3h3v-3M8.500 13.500h3" stroke="#fff" /></Svg></Task>
      <Task><span className="flex h-[16px] w-[20px] border-2 border-[#999] bg-[#292929] pl-px font-['Liberation_Mono'] text-[5px] leading-[7px] text-[#888]">C:\_</span></Task>
      <Task><span className="flex h-[18px] w-[18px] items-center justify-center rounded-full bg-[#2aa1de] pr-[2px] text-white"><FaTelegramPlane size={12} /></span></Task>
      <Task><Cmd /></Task>
      <Task><Cmd /></Task>
      <Task><Svg><path d="M5 1h15v4.500H5z" fill="#41a5ee" /><path d="M5 5.500h15V10H5z" fill="#2b7cd3" /><path d="M5 10h15v4.500H5z" fill="#185abd" /><path d="M5 14.500h15V19H5z" fill="#103f91" /><path d="M0 4h12v12H0z" fill="#185abd" /><path d="M2.500 7l1.500 6 2-5.500L8 13l1.500-6" stroke="#fff" strokeWidth="1.400" /></Svg></Task>
      <Task open><Svg><path d="M1 .5h16V20H1z" fill="#f2f2ee" stroke="#8a8a8a" strokeWidth=".7" /><path d="M2 12l14-2v9H2z" fill="#8ed12f" /><path d="M2 1.500h14" stroke="#666" strokeDasharray="1.500 1" /><path d="M5 10.500V6.500h2v4M9 6.500v4M11 6.500v4" stroke="#222" /><path d="M18.500 1L12 15" stroke="#e8930c" strokeWidth="2.200" /></Svg></Task>
      <Task><Svg><path d="M10 0l4.500 4.500L10 9 5.500 4.500z" fill="#e86a6a" /><path d="M5 5l4.500 4.700L5 14.500.2 10z" fill="#6f9fe8" /><path d="M15 5l4.800 5-4.800 4.500-4.500-4.800z" fill="#7bbf54" /><path d="M10 10.500l4.500 4.700L10 20l-4.500-4.800z" fill="#f2d06b" /><path d="M7 3l3.500 3.500v9M10.500 8l4 2.500" stroke="#3b2b23" strokeWidth="1.300" /><circle cx="10.500" cy="14.500" r="1.600" fill="#3b2b23" /><circle cx="14.500" cy="10.500" r="1.600" fill="#3b2b23" /></Svg></Task>
      <Task><Chrome /></Task>
      <Task><span className="relative"><Chrome /><svg className="absolute left-[10px] top-[10px]" width="10" height="10"><circle cx="5" cy="5" r="5" fill="#c9d3e0" /><circle cx="5" cy="3.300" r="2" fill="#8a5a3c" /><path d="M3 2.500q2-2.500 4 0V1.500L5 .5 3 1.500zM1 9q4-6.500 8 0L5 10z" fill="#15171c" /></svg></span></Task>
      <Task active><Chrome badge="bg-[#5d4037]" text="S" /></Task>
      <Task open><Chrome badge="bg-[#e91e63]" text="S" /></Task>
      <Task><Svg>
        <circle cx="10" cy="10" r="10" fill="#fff" />
        <g strokeWidth="2.600" strokeLinecap="round">
          <path d="M8.300 4.500v3.800M4.500 8.300h3.800" stroke="#36c5f0" /><path d="M11.800 4.500v3.800M15.500 8.300h-.2" stroke="#2eb67d" />
          <path d="M11.800 11.800h3.700M11.800 15.500v-.2" stroke="#ecb22e" /><path d="M8.300 11.800v3.700M4.500 11.800h.2" stroke="#e01e5a" />
        </g>
      </Svg></Task>
      <Task><Svg><circle cx="10" cy="10" r="10" fill="#4fb87a" /><g stroke="#e9f7ee"><ellipse cx="10" cy="10" rx="7.200" ry="2.800" transform="rotate(15 10 10)" /><ellipse cx="10" cy="10" rx="7.200" ry="2.800" transform="rotate(75 10 10)" /><ellipse cx="10" cy="10" rx="7.200" ry="2.800" transform="rotate(135 10 10)" /></g><circle cx="10" cy="10" r="1.200" fill="#fff" /></Svg></Task>
      <Task><Svg><rect width="20" height="20" rx="1.500" fill="#4a4a4a" /><path d="M5 6.500l10-3v3.500L9 9l6 2v3.500l-10 3V14l6-2-6-2z" fill="#ff9800" /></Svg></Task>
      <Task><Svg><circle cx="10" cy="10" r="9.300" fill="#8e44ad" stroke="#e4d3ee" strokeWidth="1.200" /><path d="M5.500 5l2.500 1.300h4L14.500 5l.5 3.500c1 4-1 6-5 6s-6-2-5-6z" fill="#fff" /></Svg></Task>
      <Task><Svg><path d="M6 1.500l12 1.500-3 14L0 13z" fill="#7fb9c4" /><path d="M9 2l9 1-4 12.500-8-1.500z" fill="#c9e7ea" opacity=".75" /><path d="M17.500 3l1.500 12-4 2z" fill="#8d8054" /></Svg></Task>
      <Task><Svg><path d="M0 0h14.500v5H20v15H0z" fill="#f68b1f" /><path d="M16 0l4 4h-4z" fill="#f68b1f" /><path d="M14.500 7.500c-5-1.500-9.500 0-9.500 4.200 0 4.300 7.500 4.300 8 .2h-3.500" stroke="#fff" strokeWidth="2.600" /></Svg></Task>
      <Task><Svg><path d="M1.500 3.500L10 .7l8 2.800-1.500 11L10 19l-6.500-4.500z" fill="#12345c" stroke="#d8e1ec" strokeWidth="1.300" strokeLinejoin="round" /><path d="M1.500 4L10 7.500 18 4M10 7.500V19" stroke="#d8e1ec" strokeWidth="1.600" /></Svg></Task>
      <Task><Svg><rect width="20" height="20" fill="#fff" /><g strokeWidth="2.300"><path d="M8.500 5.800L3 10" stroke="#ea4335" /><path d="M2.800 9.500l5.700 4" stroke="#4285f4" /><path d="M11.500 5.800L17 10" stroke="#34a853" /><path d="M17 9.500l-5.500 4" stroke="#fbbc05" /></g></Svg></Task>
      <Task><span className="relative flex"><Svg><path d="M10 0a8.300 8.300 0 0 1 8.300 8.500c0 4-3.500 8-8.300 11v-3A8.200 8.200 0 1 1 10 0z" fill="#14907f" /></Svg><span className="absolute left-[4px] top-[1px] text-[12px] font-semibold leading-[13px] text-white">@</span></span></Task>
      <Task><Svg><path d="M2 2h16v8.500h-7.500V18H2z" fill="#ffe600" /><path d="M10.500 18v-7.500H18z" fill="#5a5207" /><path d="M10.500 18L18 10.500V18z" fill="#ffe600" /></Svg></Task>
      <Task><VscVscode size={20} color="#2b9bec" /></Task>
      <Task stacked><Svg><rect width="20" height="20" fill="#fff" /><rect x="10.500" y="2.500" width="6" height="5" fill="#1c1cc8" stroke="#888" /><path d="M10 9.500h8" stroke="#777" strokeWidth="1.600" /><rect x="4.500" y="9.500" width="5" height="4" fill="#1c1cc8" stroke="#888" /><path d="M3 16h8" stroke="#666" strokeWidth="2" /><path d="M9 10l5-1-2 3" stroke="#c9b411" strokeWidth="1.400" /></Svg></Task>
      <Task open><Svg><path d="M1 1h18v18H1z" fill="#29b6f6" /><path d="M1 12l6-5.500L19 17v2H1z" fill="#1a5fa8" /><path d="M12 11l3-3 4 3.500V17z" fill="#1c73c4" /><circle cx="13" cy="5" r="2" fill="#fff" /></Svg></Task>
      <div className="ml-auto flex items-center pr-[5px] text-[14.500px] text-[#f2f2f2]">
        <svg width="19" height="12" fill="none" className="mr-[13px]"><path d="M.7.700h16v10H.7zM18 4v4" stroke="#fff" strokeWidth="1.300" /><path d="M2.500 2.500h10v6.500h-10z" fill="#fff" /></svg>
        <svg width="16" height="16" fill="none" className="mr-[11px]"><g strokeWidth="1.300"><path d="M1 15C1.500 7 7 1.500 15 1" stroke="#857d75" /><path d="M4.500 15.500C5 9.500 9 5.300 15 5M8.500 15.500c.3-3.500 3-6 6.500-6.500" stroke="#e8e8e8" /></g><circle cx="13.500" cy="14" r="1.600" fill="#fff" /></svg>
        <svg width="21" height="18" fill="none" className="mr-[12px]"><path d="M1 6h3l4-4v14l-4-4H1z" stroke="#fff" strokeWidth="1.200" /><path d="M11 6.500q2 2.500 0 5M14 4q4 5 0 10M17 1.500q6 7.500 0 15" stroke="#e8e8e8" strokeWidth="1.200" /></svg>
        <span className="w-[49px] tracking-[-0.200px]">ENG</span>
        <span className="w-[81px] whitespace-nowrap tracking-[-0.400px]">6:11 PM</span>
        <svg width="20" height="20" fill="none" className="mr-[25px]"><path d="M.7 1h18.600v15H13l-3 3-3-3H.7z" stroke="#fff" strokeWidth="1.300" /></svg>
        <span className="h-[38px] w-px bg-[#8a837b]" />
      </div>
    </div>
  );
}

export default function App() {
  return (
    <div className="h-[1080px] w-[1920px] overflow-hidden bg-white font-['Open_Sans',sans-serif]">
      <TabStrip />
      <Toolbar />
      <Bookmarks />
      <AwsNav />
      <Page />
      <Footer />
      <Taskbar />
    </div>
  );
}
